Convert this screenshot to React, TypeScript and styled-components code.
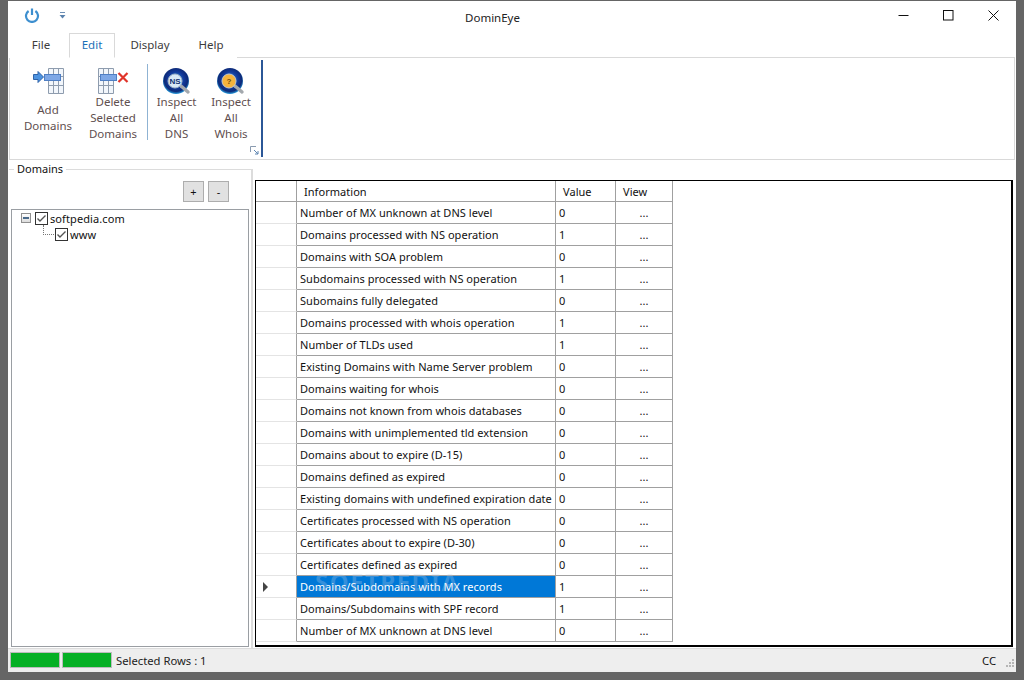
import React from "react";
import styled, { createGlobalStyle } from "styled-components";

const GlobalStyle = createGlobalStyle`
  html, body {
    margin: 0;
    padding: 0;
    background-color: #656565;
  }
  * {
    box-sizing: border-box;
  }
`;

const Page = styled.div`
  width: 1024px;
  height: 680px;
  padding: 1px 8px 8px 8px;
  overflow: hidden;
  font-family: "Noto Sans", "Open Sans", sans-serif;
  font-size: 11px;
  color: #111;
`;

const Window = styled.div`
  width: 1008px;
  height: 671px;
  background-color: #fff;
  display: flex;
  flex-direction: column;
  position: relative;
`;

const TitleBar = styled.div`
  height: 32px;
  display: flex;
  align-items: center;
  position: relative;
  flex: none;
`;

const QuickIcons = styled.div`
  display: flex;
  align-items: center;
  gap: 19px;
  padding: 0 0 4px 16px;
  width: 200px;
`;

const Title = styled.div`
  flex: 1;
  text-align: center;
  font-size: 11.5px;
  padding-top: 1px;
  padding-left: 2px;
  color: #222;
  padding-right: 106px;
`;

const WindowButtons = styled.div`
  display: flex;
  align-items: center;
  margin-top: -4px;
`;

const WindowButton = styled.div`
  width: 45px;
  height: 28px;
  display: flex;
  align-items: center;
  justify-content: center;
`;

const TabRow = styled.div`
  height: 25px;
  display: flex;
  align-items: flex-end;
  padding-left: 1px;
  flex: none;
  position: relative;
  z-index: 1;
`;

const Tab = styled.div<{ $active?: boolean; $width: number; $shift?: number }>`
  width: ${(p) => p.$width}px;
  height: 25px;
  padding-left: ${(p) => p.$shift ?? 0}px;
  padding-bottom: 2px;
  display: flex;
  align-items: center;
  justify-content: center;
  font-size: 11.5px;
  color: ${(p) => (p.$active ? "#1b6fb8" : "#3c3c3c")};
  background-color: #fff;
  border: 1px solid ${(p) => (p.$active ? "#d9d9d9" : "transparent")};
  border-bottom: 1px solid ${(p) => (p.$active ? "#fff" : "transparent")};
`;

const Ribbon = styled.div`
  height: 103px;
  margin: 0 1px;
  margin-top: -1px;
  flex: none;
  border: 1px solid #d9d9d9;
  display: flex;
  align-items: stretch;
`;

const RibbonGroup = styled.div`
  position: relative;
  width: 253px;
  height: 97px;
  margin-top: 2px;
  border-right: 2px solid #2b5797;
  display: flex;
  padding-left: 3px;
`;

const RibbonButton = styled.div<{ $width: number; $pad: number }>`
  width: ${(p) => p.$width}px;
  padding-top: 8px;
  display: flex;
  flex-direction: column;
  align-items: center;
  text-align: center;
  color: #5f4f4f;
  font-size: 11.5px;
  line-height: 16px;

  svg {
    margin-bottom: ${(p) => p.$pad}px;
    flex: none;
  }
`;

const RibbonSeparator = styled.div`
  width: 1px;
  height: 76px;
  margin: 4px 0 0 4px;
  background-color: #8fb3d3;
`;

const Launcher = styled.div`
  position: absolute;
  right: 2px;
  bottom: 2px;
  display: flex;
`;

const Body = styled.div`
  flex: 1;
  display: flex;
  min-height: 0;
  padding: 0 3px 0 1px;
`;

const LeftPanel = styled.div`
  width: 242px;
  flex: none;
  position: relative;
  display: flex;
  flex-direction: column;
  padding: 20px 2px 1px 2px;
  margin-top: 9px;
  border-top: 1px solid #dcdcdc;
`;

const GroupLabel = styled.div`
  position: absolute;
  top: -8px;
  left: 5px;
  padding: 0 3px;
  background-color: #fff;
  font-size: 11px;
  line-height: 14px;
  color: #111;
`;

const TreeButtons = styled.div`
  height: 28px;
  margin-top: -9px;
  display: flex;
  justify-content: flex-end;
  gap: 4px;
  padding-right: 20px;
  flex: none;
`;

const SmallButton = styled.div`
  width: 21px;
  height: 21px;
  background-color: #e1e1e1;
  border: 1px solid #adadad;
  display: flex;
  align-items: center;
  justify-content: center;
  font-size: 11px;
  color: #111;
`;

const TreeBox = styled.div`
  flex: 1;
  border: 1px solid #9a9ea3;
  padding: 0 0 0 9px;
`;

const TreeRow = styled.div<{ $indent: number }>`
  height: 16px;
  display: flex;
  align-items: center;
  padding-left: ${(p) => p.$indent}px;
  font-size: 11px;
  letter-spacing: 0.1px;
`;

const Expander = styled.div`
  width: 10px;
  height: 10px;
  border: 1px solid #8f8f8f;
  background: linear-gradient(#fff, #dcdcdc);
  position: relative;
  margin-right: 4px;
  flex: none;

  &::after {
    content: "";
    position: absolute;
    left: 1px;
    right: 1px;
    top: 3px;
    height: 2px;
    background-color: #4a6a8a;
  }
`;

const CheckIcon = styled.svg`
  width: 13px;
  height: 13px;
  margin-right: 2px;
  flex: none;
`;

const TreeLine = styled.div`
  width: 11px;
  height: 10px;
  margin: -8px 1px 0 0;
  border-left: 1px dotted #777;
  border-bottom: 1px dotted #777;
  flex: none;
`;

const Splitter = styled.div`
  width: 2px;
  margin-top: 9px;
  background-color: #dcdcdc;
  flex: none;
`;

const GridWrap = styled.div`
  flex: 1;
  margin: 20px 0 1px 2px;
  border: 1px solid #000;
  border-width: 1px 2px 2px 1px;
  position: relative;
  overflow: hidden;
`;

const Table = styled.table`
  border-collapse: separate;
  border-spacing: 0;
  table-layout: fixed;
  width: 417px;
  font-size: 11px;
  letter-spacing: 0.04px;
`;

const HeadCell = styled.th<{ $width: number; $pad: number }>`
  width: ${(p) => p.$width}px;
  height: 21px;
  padding: 0 0 0 ${(p) => p.$pad}px;
  text-align: left;
  font-weight: 400;
  border-right: 1px solid #a0a0a0;
  border-bottom: 1px solid #a0a0a0;
`;

const RowHeader = styled.td`
  height: 22px;
  padding: 0;
  border-right: 1px solid #a0a0a0;
  border-bottom: 1px solid #e4e4e4;
  text-align: center;
`;

const Cell = styled.td<{ $selected?: boolean; $center?: boolean }>`
  height: 22px;
  padding: ${(p) => (p.$center ? "0" : "0 0 0 3px")};
  white-space: nowrap;
  overflow: hidden;
  border-right: 1px solid #a0a0a0;
  border-bottom: 1px solid #a0a0a0;
  text-align: ${(p) => (p.$center ? "center" : "left")};
  background-color: ${(p) => (p.$selected ? "#0078d7" : "#fff")};
  color: ${(p) => (p.$selected ? "#fff" : "#111")};
`;

const RowArrow = styled.div`
  width: 0;
  height: 0;
  margin-left: 7px;
  border-top: 5px solid transparent;
  border-bottom: 5px solid transparent;
  border-left: 5px solid #444;
  text-align: left;
`;

const Watermark = styled.div`
  position: absolute;
  left: 59px;
  top: 384px;
  font-size: 24px;
  font-weight: 700;
  letter-spacing: 1.5px;
  color: rgba(190, 208, 230, 0.28);
  pointer-events: none;
`;

const StatusBar = styled.div`
  height: 24px;
  flex: none;
  background-color: #eeeeee;
  border-top: 1px solid #dcdcdc;
  display: flex;
  align-items: center;
  padding: 0 2px 1px 2px;
  gap: 2px;
  font-size: 11.25px;
  position: relative;
`;

const ProgressBlock = styled.div`
  width: 50px;
  height: 16px;
  background-color: #06b025;
  border: 1px solid #bcbcbc;
`;

const StatusText = styled.div`
  margin-left: 2px;
  flex: 1;
  color: #222;
`;

const StatusRight = styled.div`
  margin-right: 18px;
  color: #111;
`;

const Grip = styled.svg`
  position: absolute;
  right: 1px;
  bottom: 3px;
`;

const rows = [
  ["Number of MX unknown at DNS level", "0"],
  ["Domains processed with NS operation", "1"],
  ["Domains with SOA problem", "0"],
  ["Subdomains processed with NS operation", "1"],
  ["Subomains fully delegated", "0"],
  ["Domains processed with whois operation", "1"],
  ["Number of TLDs used", "1"],
  ["Existing Domains with Name Server problem", "0"],
  ["Domains waiting for whois", "0"],
  ["Domains not known from whois databases", "0"],
  ["Domains with unimplemented tld extension", "0"],
  ["Domains about to expire (D-15)", "0"],
  ["Domains defined as expired", "0"],
  ["Existing domains with undefined expiration date", "0"],
  ["Certificates processed with NS operation", "0"],
  ["Certificates about to expire (D-30)", "0"],
  ["Certificates defined as expired", "0"],
  ["Domains/Subdomains with MX records", "1"],
  ["Domains/Subdomains with SPF record", "1"],
  ["Number of MX unknown at DNS level", "0"],
];

const SELECTED_ROW = 17;

const AddIcon: React.FC = () => (
  <svg width="31" height="26" viewBox="0 0 31 26">
    <path d="M15.5 0.5H30.5V25.5H15.5Z" fill="#f2f6fb" stroke="#8e9cae" />
    <path d="M20.5 0.5V25.5M25.5 0.5V25.5M15.5 8.5H30.5M15.5 17.5H30.5" fill="none" stroke="#8e9cae" />
    <rect x="11.5" y="6.5" width="16" height="6" fill="#7da7e6" stroke="#4f7fc4" />
    <path d="M0.5 6.5H5V3.5L10.5 9L5 14.5V11.5H0.5Z" fill="#4d93e0" stroke="#2f63a8" />
  </svg>
);

const DeleteIcon: React.FC = () => (
  <svg width="31" height="26" viewBox="0 0 31 26">
    <path d="M0.5 0.5H15.5V25.5H0.5Z" fill="#f2f6fb" stroke="#8e9cae" />
    <path d="M5.5 0.5V25.5M10.5 0.5V25.5M0.5 8.5H15.5M0.5 17.5H15.5" fill="none" stroke="#8e9cae" />
    <rect x="2.5" y="6.5" width="16" height="6" fill="#7da7e6" stroke="#4f7fc4" />
    <path d="M20.5 5L29.5 14M29.5 5L20.5 14" stroke="#e0342a" strokeWidth="2.2" />
  </svg>
);

const InspectIcon: React.FC<{ kind: "ns" | "whois" }> = ({ kind }) => {
  const id = `globe-${kind}`;
  return (
    <svg width="28" height="28" viewBox="0 0 28 28">
      <defs>
        <radialGradient id={id} cx="50%" cy="45%" r="55%">
          <stop offset="0%" stopColor="#3f9fe0" />
          <stop offset="55%" stopColor="#123a9c" />
          <stop offset="82%" stopColor="#0d2a78" />
          <stop offset="100%" stopColor="#2aa0e0" />
        </radialGradient>
      </defs>
      <circle cx="13" cy="13" r="13" fill={`url(#${id})`} />
      <path d="M18 18L25 24" stroke="#a3a8ad" strokeWidth="3.4" strokeLinecap="round" />
      {kind === "ns" ? (
        <>
          <circle cx="12" cy="13" r="7" fill="#d9e9f7" stroke="#9fb3c8" />
          <text x="12" y="16" textAnchor="middle" fontSize="8" fontWeight="700" fill="#12306e" fontFamily="Liberation Sans, sans-serif">
            NS
          </text>
        </>
      ) : (
        <>
          <circle cx="12" cy="13" r="7" fill="#f5b33c" stroke="#c9c9c9" />
          <text x="12" y="16" textAnchor="middle" fontSize="8" fontWeight="700" fill="#6b4a10" fontFamily="Liberation Sans, sans-serif">
            ?
          </text>
        </>
      )}
    </svg>
  );
};

const Check: React.FC = () => (
  <CheckIcon viewBox="0 0 13 13">
    <rect x="0.5" y="0.5" width="12" height="12" fill="#fff" stroke="#333" />
    <path d="M2.5 6.5L5 9L10.5 3.5" fill="none" stroke="#555" strokeWidth="1.4" />
  </CheckIcon>
);

const App: React.FC = () => {
  return (
    <Page>
      <GlobalStyle />
      <Window>
        <TitleBar>
          <QuickIcons>
            <svg width="16" height="16" viewBox="0 0 16 16">
              <path d="M4.6 4A6 6 0 1 0 11.4 4" fill="none" stroke="#3d8fcf" strokeWidth="2.2" />
              <path d="M8 1.5V8" stroke="#3d8fcf" strokeWidth="2.2" />
            </svg>
            <svg width="7" height="8" viewBox="0 0 7 8">
              <path d="M1 1.5H6" stroke="#6d8fb5" />
              <path d="M0.5 4H6.5L3.5 7.5Z" fill="#5a82ad" />
            </svg>
          </QuickIcons>
          <Title>DominEye</Title>
          <WindowButtons>
            <WindowButton>
              <svg width="11" height="11" viewBox="0 0 11 11">
                <path d="M0.5 5.5H10.5" stroke="#111" />
              </svg>
            </WindowButton>
            <WindowButton>
              <svg width="11" height="11" viewBox="0 0 11 11">
                <rect x="0.5" y="0.5" width="9.5" height="9.5" fill="none" stroke="#111" />
              </svg>
            </WindowButton>
            <WindowButton>
              <svg width="11" height="11" viewBox="0 0 11 11">
                <path d="M0.5 0.5L10.5 10.5M10.5 0.5L0.5 10.5" stroke="#111" />
              </svg>
            </WindowButton>
          </WindowButtons>
        </TitleBar>

        <TabRow>
          <Tab $width={60} $shift={4}>
            File
          </Tab>
          <Tab $width={46} $active>
            Edit
          </Tab>
          <Tab $width={70}>Display</Tab>
          <Tab $width={52}>Help</Tab>
        </TabRow>

        <Ribbon>
          <RibbonGroup>
            <RibbonButton $width={70} $pad={8}>
              <AddIcon />
              Add
              <br />
              Domains
            </RibbonButton>
            <RibbonButton $width={60} $pad={0}>
              <DeleteIcon />
              Delete
              <br />
              Selected
              <br />
              Domains
            </RibbonButton>
            <RibbonSeparator />
            <RibbonButton $width={57} $pad={-2}>
              <InspectIcon kind="ns" />
              Inspect
              <br />
              All
              <br />
              DNS
            </RibbonButton>
            <RibbonButton $width={52} $pad={-2}>
              <InspectIcon kind="whois" />
              Inspect
              <br />
              All
              <br />
              Whois
            </RibbonButton>
            <Launcher>
              <svg width="9" height="9" viewBox="0 0 9 9">
                <path d="M0.5 6V0.5H6" fill="none" stroke="#8a9bb0" />
                <path d="M4 4L8 8M8 5V8H5" fill="none" stroke="#5c84b1" />
              </svg>
            </Launcher>
          </RibbonGroup>
        </Ribbon>

        <Body>
          <LeftPanel>
            <GroupLabel>Domains</GroupLabel>
            <TreeButtons>
              <SmallButton>+</SmallButton>
              <SmallButton>-</SmallButton>
            </TreeButtons>
            <TreeBox>
              <TreeRow $indent={0}>
                <Expander />
                <Check />
                softpedia.com
              </TreeRow>
              <TreeRow $indent={22}>
                <TreeLine />
                <Check />
                www
              </TreeRow>
            </TreeBox>
          </LeftPanel>
          <Splitter />
          <GridWrap>
            <Table>
              <thead>
                <tr>
                  <HeadCell $width={41} $pad={0} />
                  <HeadCell $width={259} $pad={7}>
                    Information
                  </HeadCell>
                  <HeadCell $width={60} $pad={7}>
                    Value
                  </HeadCell>
                  <HeadCell $width={57} $pad={7}>
                    View
                  </HeadCell>
                </tr>
              </thead>
              <tbody>
                {rows.map(([label, value], index) => (
                  <tr key={index}>
                    <RowHeader>{index === SELECTED_ROW && <RowArrow />}</RowHeader>
                    <Cell $selected={index === SELECTED_ROW}>{label}</Cell>
                    <Cell>{value}</Cell>
                    <Cell $center>...</Cell>
                  </tr>
                ))}
              </tbody>
            </Table>
            <Watermark>SOFTPEDIA</Watermark>
          </GridWrap>
        </Body>

        <StatusBar>
          <ProgressBlock />
          <ProgressBlock />
          <StatusText>Selected Rows : 1</StatusText>
          <StatusRight>CC</StatusRight>
          <Grip width="11" height="11" viewBox="0 0 11 11">
            <path d="M8 1h2v2H8zM5 4h2v2H5zM8 4h2v2H8zM2 7h2v2H2zM5 7h2v2H5zM8 7h2v2H8z" fill="#b5b5b5" />
          </Grip>
        </StatusBar>
      </Window>
    </Page>
  );
};

export default App;
